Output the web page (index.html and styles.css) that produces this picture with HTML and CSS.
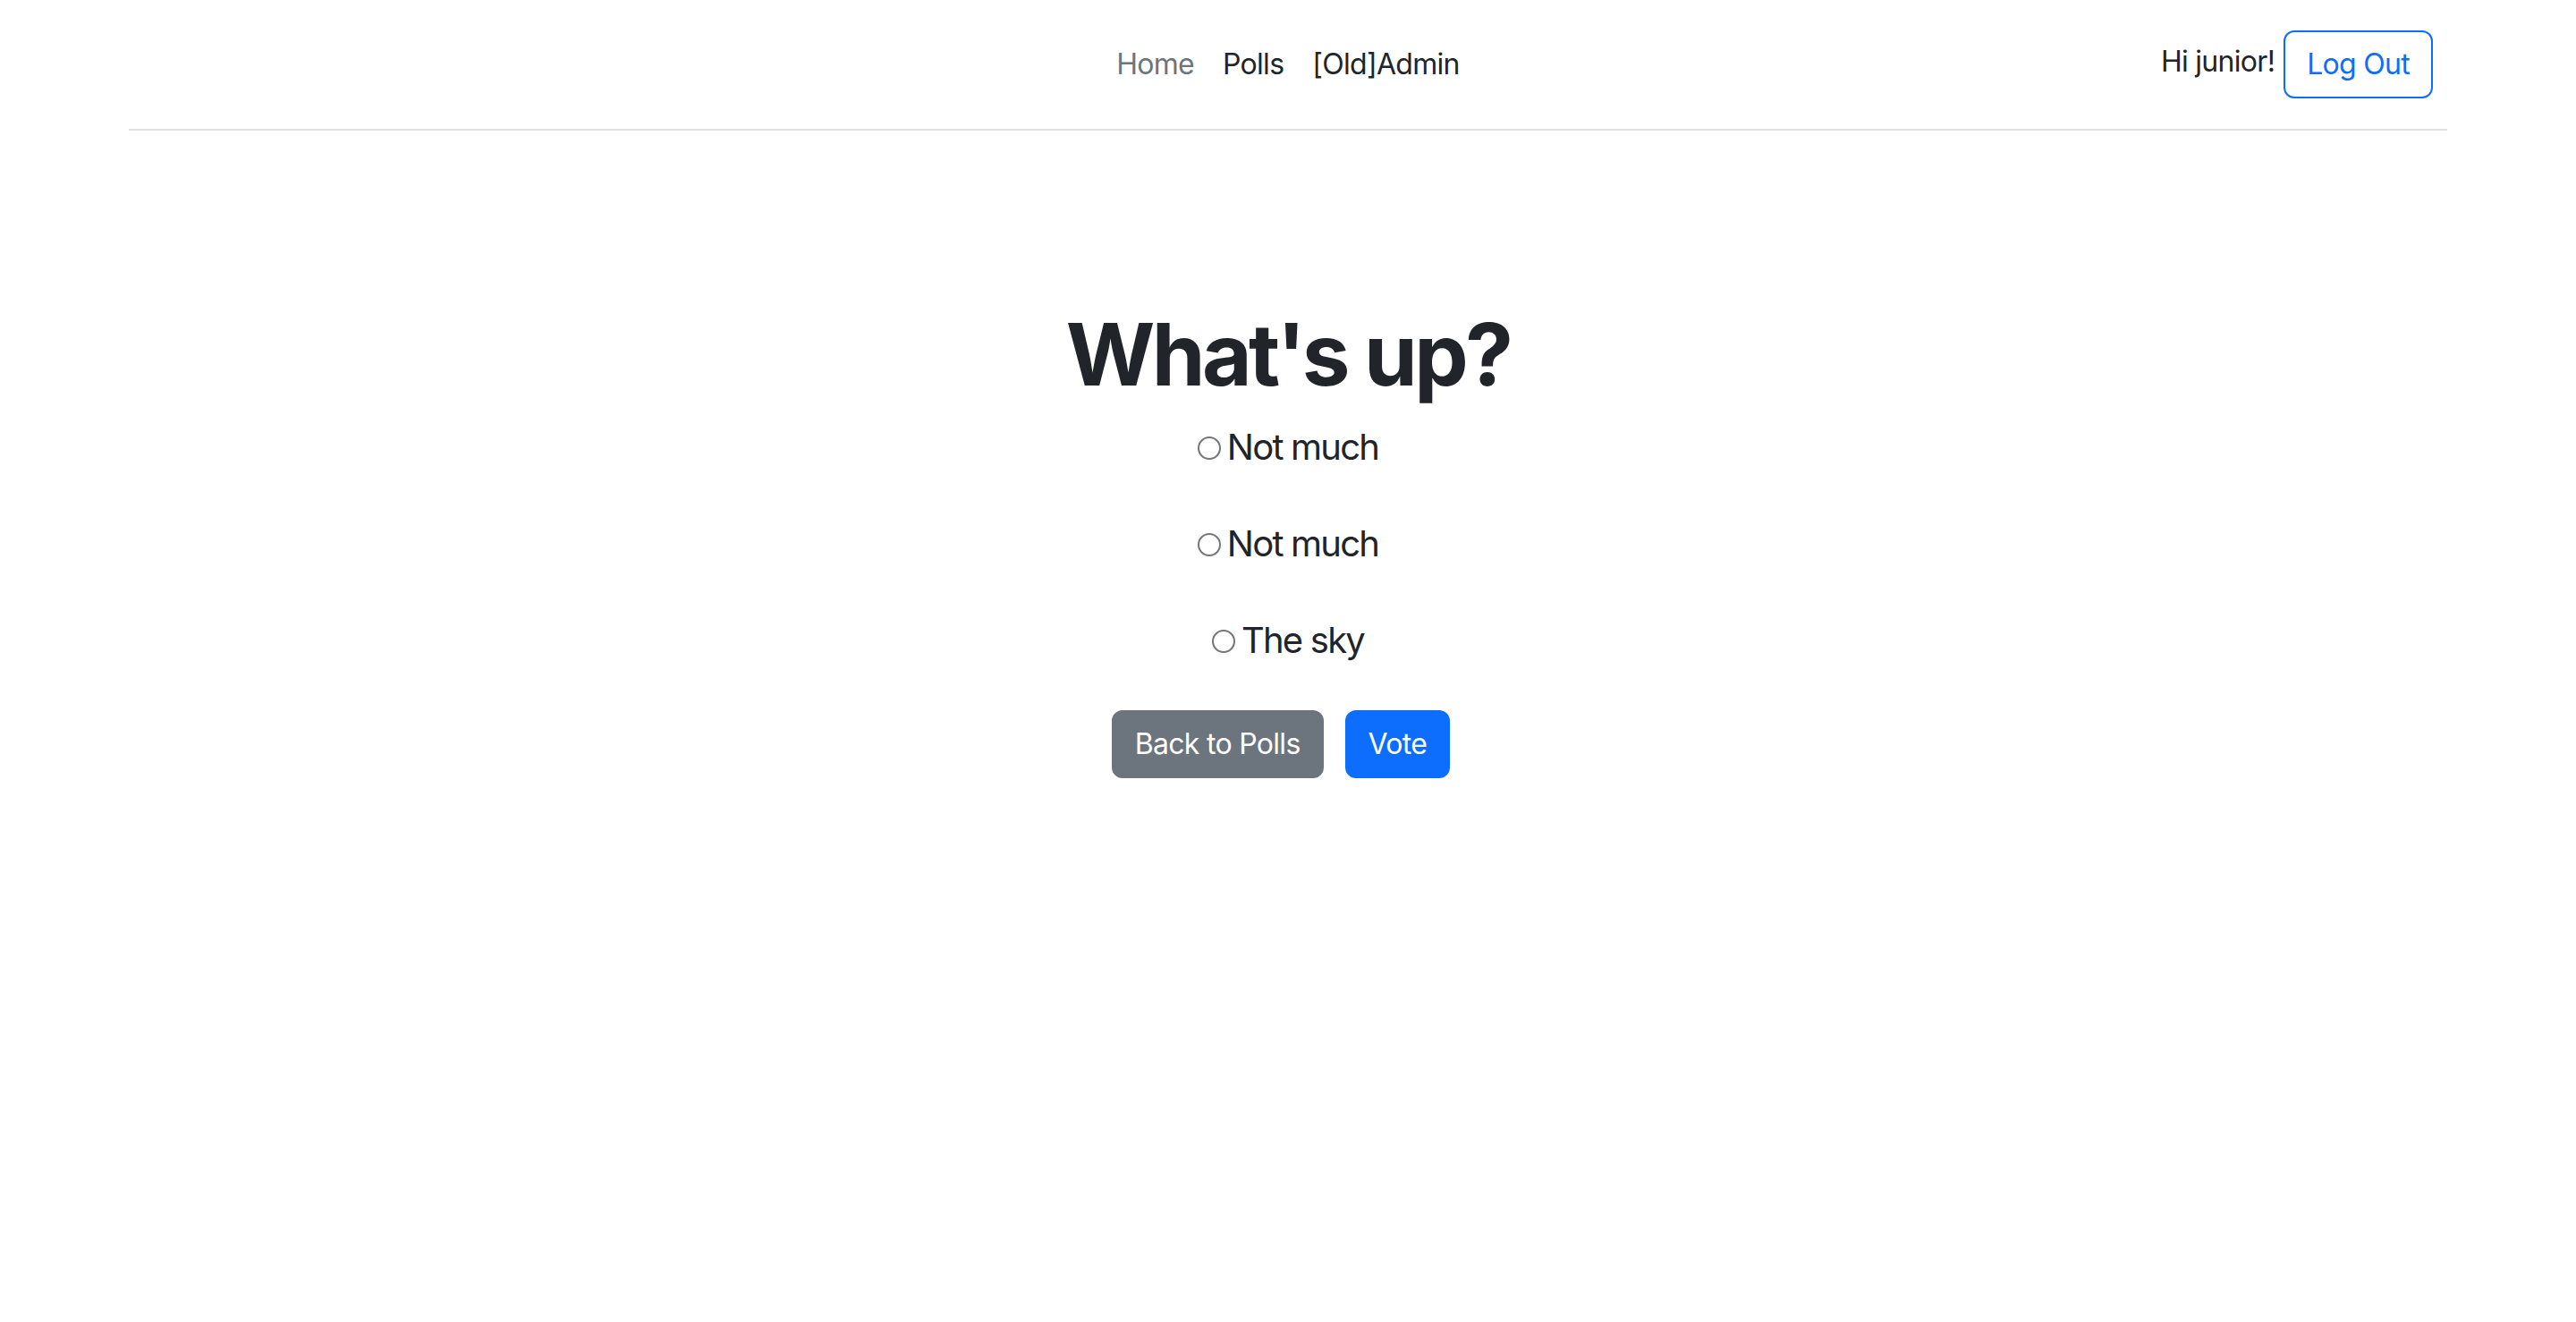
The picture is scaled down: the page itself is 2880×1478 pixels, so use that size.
FILE: index.html
```html
<!DOCTYPE html>
<html lang="en">
<head>
<meta charset="utf-8">
<title>What's up?</title>
<link rel="stylesheet" href="styles.css">
</head>
<body>
<div class="container">
  <header class="site-header">
    <div class="brand"></div>
    <ul class="nav">
      <li><a class="nav-link muted" href="#">Home</a></li>
      <li><a class="nav-link" href="#">Polls</a></li>
      <li><a class="nav-link" href="#">[Old]Admin</a></li>
    </ul>
    <div class="user">
      <span class="greeting">Hi junior!</span>
      <a class="btn btn-outline" href="#">Log Out</a>
    </div>
  </header>
  <main class="poll">
    <h1 class="question">What's up?</h1>
    <form class="vote-form">
      <div class="choice"><input type="radio" name="choice" id="c1"><label for="c1">Not much</label></div>
      <div class="choice"><input type="radio" name="choice" id="c2"><label for="c2">Not much</label></div>
      <div class="choice"><input type="radio" name="choice" id="c3"><label for="c3">The sky</label></div>
      <div class="actions">
        <a class="btn btn-secondary" href="#">Back to Polls</a>
        <button class="btn btn-primary" type="submit">Vote</button>
      </div>
    </form>
  </main>
</div>
</body>
</html>
```

FILE: styles.css
```css
* { box-sizing: border-box; }
html, body {
  margin: 0;
  background: #fff;
  color: #212529;
  font-family: Inter, "Liberation Sans", sans-serif;
  font-size: 32px;
  line-height: 48px;
  letter-spacing: -0.022em;
}
.container {
  max-width: 2640px;
  margin: 0 auto;
  padding: 0 24px;
}
.site-header {
  display: grid;
  grid-template-columns: 1fr auto 1fr;
  align-items: center;
  padding: 32px 0;
  border-bottom: 2px solid #dee2e6;
}
.nav {
  display: flex;
  list-style: none;
  margin: 0;
  padding: 0;
}
.nav-link {
  display: block;
  padding: 16px 16px;
  color: #212529;
  text-decoration: none;
}
.nav-link.muted { color: #6c757d; }
.user {
  display: flex;
  justify-content: flex-end;
  align-items: center;
  gap: 10px;
  margin-right: 16px;
}
.greeting { padding-bottom: 7px; }
.btn {
  display: inline-block;
  font-family: inherit;
  font-size: 32px;
  line-height: 48px;
  letter-spacing: -0.022em;
  padding: 12px 24px;
  border: 2px solid transparent;
  border-radius: 12px;
  text-decoration: none;
  cursor: pointer;
}
.btn-outline { color: #0d6efd; border-color: #0d6efd; background: #fff; }
.btn-secondary { color: #fff; background: #6c757d; border-color: #6c757d; }
.btn-primary { color: #fff; background: #0d6efd; border-color: #0d6efd; }
.poll {
  text-align: center;
  padding-top: 193px;
}
.question {
  margin: 0 0 16px;
  font-size: 96px;
  line-height: 1.2;
  font-weight: 700;
  letter-spacing: -0.0375em;
}
.vote-form { margin: 0; }
.choice {
  font-size: 40px;
  line-height: 60px;
  margin-bottom: 48px;
  letter-spacing: -0.045em;
}
.choice input {
  appearance: none;
  -webkit-appearance: none;
  width: 26px;
  height: 26px;
  margin: 0 7px 0 0;
  border: 2px solid #767676;
  border-radius: 50%;
  background: #fff;
  vertical-align: baseline;
}
.actions {
  display: flex;
  justify-content: center;
  gap: 8px;
}
.actions .btn { margin-right: 16px; }
```
